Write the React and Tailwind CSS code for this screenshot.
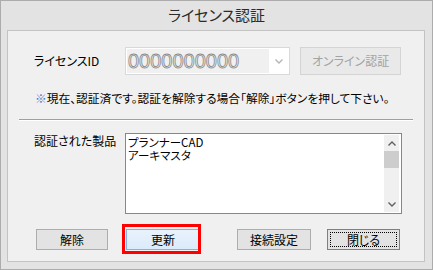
import React from 'react';

const jp = "font-['Noto_Sans_CJK_JP','Noto_Sans',sans-serif] [font-feature-settings:'palt']";

// Small chevron used by the combo box and the scrollbar
function Chevron({ up = false, color = '#606060', className = '' }) {
  return (
    <svg width="8" height="5" viewBox="0 0 8 5" className={className}>
      <path
        d={up ? 'M0.5 4.5 L4 1 L7.5 4.5' : 'M0.5 0.5 L4 4 L7.5 0.5'}
        fill="none"
        stroke={color}
        strokeWidth="1.4"
      />
    </svg>
  );
}

function Btn({ children, className = '' }) {
  return (
    <div
      className={`h-[21px] flex items-center justify-center border border-[#adadad] bg-[#e3e3e3] text-[12px] text-black ${className}`}
    >
      {children}
    </div>
  );
}

export default function App() {
  return (
    <div className={`w-[433px] h-[270px] border border-[#acacac] bg-[#e3e3e3] flex flex-col ${jp}`}>
      {/* Title */}
      <div className="h-[29px] flex items-center justify-center text-[15px] text-[#2b2b2b]">
        ライセンス認証
      </div>

      {/* Panel */}
      <div className="ml-[6px] w-[418px] h-[232px] border border-[#c3c3c3] bg-[#f0f0f0] flex flex-col">
        {/* License ID row */}
        <div className="mt-[16px] h-[28px] flex items-center">
          <div className="ml-[26px] w-[91px] text-[12px] text-black">ライセンスID</div>
          <div className="w-[165px] h-[28px] border border-[#d9d9d9] bg-white p-[1px] flex items-center">
            <div className="w-[142px] h-full bg-[#f0f0f0] flex items-center pl-[1px] font-['Liberation_Sans',sans-serif] text-[20px] text-[#f0f0f0] [-webkit-text-stroke:0.8px_#8a8a8a] leading-none">
              0000000000
            </div>
            <div className="flex-1 flex items-center justify-center">
              <Chevron color="#b5b5b5" />
            </div>
          </div>
          <div className="ml-[10px] w-[101px] h-[28px] border border-[#d4d4d4] bg-[#e9e9e9] flex items-center justify-center text-[12px] text-[#a3a3a3]">
            オンライン認証
          </div>
        </div>

        {/* Note */}
        <div className="mt-[15px] ml-[27px] h-[16px] leading-[16px] text-[11.75px] text-black whitespace-nowrap">
          <span className="text-[#4a7fd0]">※</span>現在、認証済です。認証を解除する場合「解除」ボタンを押して下さい。
        </div>

        {/* Separator */}
        <div className="mt-[13px] ml-[11px] w-[394px] h-[1px] bg-[#a0a0a0]" />
        <div className="ml-[11px] w-[394px] h-[1px] bg-white" />

        {/* Products */}
        <div className="mt-[12px] flex">
          <div className="ml-[26px] w-[91px] text-[12px] leading-[16px] text-black">認証された製品</div>
          <div className="w-[277px] h-[81px] border border-[#828790] bg-white flex">
            <div className="flex-1 pl-[2px] pt-[2px] text-[11.5px] leading-[13px] text-black">
              <div>プランナーCAD</div>
              <div>アーキマスタ</div>
            </div>
            <div className="w-[15px] my-[1px] mr-[2px] bg-[#f0f0f0] flex flex-col items-center">
              <div className="h-[16px] flex items-center justify-center">
                <Chevron up />
              </div>
              <div className="w-full h-[17px] bg-[#cdcdcd]" />
              <div className="flex-1" />
              <div className="h-[16px] flex items-center justify-center">
                <Chevron />
              </div>
            </div>
          </div>
        </div>

        {/* Buttons */}
        <div className="mt-[15px] flex items-center">
          <Btn className="ml-[28px] w-[72px]">解除</Btn>
          <div className="relative ml-[18px]">
            <div className="w-[74px] h-[21px] border border-[#7eb4ea] bg-[linear-gradient(#e8f2fc,#dbebfb)] flex items-center justify-center text-[12px] text-black">
              更新
            </div>
            <div className="absolute -left-[4px] -top-[5px] w-[79px] h-[30px] border-[3px] border-[#ff0000]" />
          </div>
          <Btn className="ml-[37px] w-[74px]">接続設定</Btn>
          <div className="ml-[16px] w-[73px] h-[21px] border border-[#3d8ee2] bg-[#e3e3e3] p-[2px]">
            <div className="w-full h-full border border-dotted border-black flex items-center justify-center text-[12px] text-black">
              閉じる
            </div>
          </div>
        </div>
      </div>
    </div>
  );
}
